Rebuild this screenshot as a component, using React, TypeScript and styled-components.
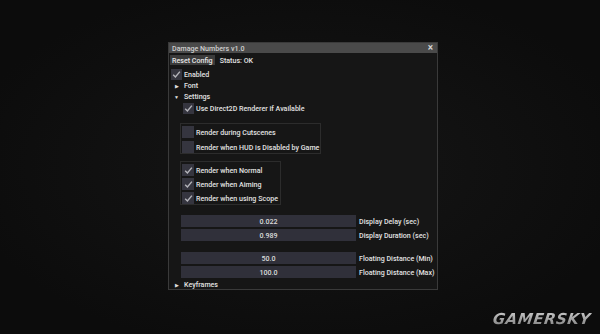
import React from "react";
import styled, { createGlobalStyle } from "styled-components";

const Global = createGlobalStyle`
  html, body { margin: 0; padding: 0; background: #0e0e0e; }
  body { width: 600px; height: 334px; overflow: hidden; font-family: Roboto, "Noto Sans", "Liberation Sans", sans-serif; }
`;

const Page = styled.div`
  position: relative;
  width: 600px;
  height: 334px;
  padding: 42px 0 0 168px;
  box-sizing: border-box;
  background: radial-gradient(ellipse at 50% 50%, #161616 0%, #0c0c0c 80%);
`;

const Window = styled.div`
  width: 270px;
  height: 248px;
  box-sizing: border-box;
  background: #161616;
  border: 1px solid #3a3a3a;
  display: flex;
  flex-direction: column;
  color: #e2e2e2;
  font-size: 7.1px;
  font-weight: 500;
  white-space: nowrap;
`;

const TitleBar = styled.div`
  height: 11px;
  background: #4a4a4a;
  display: flex;
  align-items: center;
  justify-content: space-between;
  padding: 0 4px 0 3px;
  color: #d0d0d0;
`;

const Close = styled.span`
  font-size: 10px;
  line-height: 1;
  color: #d8d8d8;
`;

const Body = styled.div`
  display: flex;
  flex-direction: column;
  padding: 1px 0 0 1px;
`;

const MenuRow = styled.div`
  height: 10px;
  display: flex;
  align-items: center;
  gap: 5px;
  margin-top: 1px;
`;

const Btn = styled.div`
  height: 10px;
  padding: 0 2px;
  background: #3b3b3b;
  display: flex;
  align-items: center;
  color: #e6e6e6;
`;

const Row = styled.div<{ $indent?: number; $top?: number; $h?: number }>`
  display: flex;
  align-items: center;
  height: ${(p) => p.$h ?? 11}px;
  padding-left: ${(p) => p.$indent ?? 0}px;
  margin-top: ${(p) => p.$top ?? 0}px;
  gap: 2px;
`;

const Box = styled.div<{ $size?: number }>`
  width: ${(p) => p.$size ?? 11}px;
  height: ${(p) => p.$size ?? 11}px;
  background: #35353f;
  display: flex;
  align-items: center;
  justify-content: center;
  flex-shrink: 0;
`;

const Arrow = styled.span`
  width: 11px;
  display: flex;
  justify-content: center;
  font-size: 5px;
  color: #e0e0e0;
`;

const Group = styled.div<{ $w: number; $top: number; $gap: number }>`
  width: ${(p) => p.$w}px;
  margin-left: 10px;
  margin-top: ${(p) => p.$top}px;
  border: 1px solid #2c2c2c;
  box-sizing: border-box;
  padding: 2px 0 0 1px;
  display: flex;
  flex-direction: column;
  gap: ${(p) => p.$gap}px;
`;

const InputRow = styled.div<{ $top: number }>`
  display: flex;
  align-items: center;
  margin-left: 11px;
  margin-top: ${(p) => p.$top}px;
  height: 12px;
  gap: 3px;
`;

const Field = styled.div`
  width: 175px;
  flex-shrink: 0;
  height: 12px;
  background: #30303a;
  display: flex;
  align-items: center;
  justify-content: center;
  color: #dcdcdc;
`;

const Watermark = styled.div`
  position: absolute;
  right: 9px;
  bottom: 6px;
  font-family: "DejaVu Sans", "Liberation Sans", sans-serif;
  font-weight: 900;
  font-style: italic;
  font-size: 15px;
  letter-spacing: 0.5px;
  transform: skewX(-8deg);
  background: linear-gradient(#d0d0d0, #7a7a7a);
  -webkit-background-clip: text;
  background-clip: text;
  -webkit-text-fill-color: transparent;
`;

const Check = () => (
  <svg width="9" height="9" viewBox="0 0 9 9">
    <path d="M1.2 4.8 L3.4 7 L7.9 1.6" stroke="#b4b4ba" strokeWidth="1.4" fill="none" />
  </svg>
);

const CheckRow: React.FC<{ checked?: boolean; label: string }> = ({ checked, label }) => (
  <Row $h={12}>
    <Box $size={12}>{checked && <Check />}</Box>
    <span>{label}</span>
  </Row>
);

export default function App() {
  return (
    <>
      <Global />
      <Page>
        <Window>
          <TitleBar>
            <span>Damage Numbers v1.0</span>
            <Close>×</Close>
          </TitleBar>
          <Body>
            <MenuRow>
              <Btn>Reset Config</Btn>
              <span>Status: OK</span>
            </MenuRow>
            <Row $indent={1} $top={3} $h={12}>
              <Box><Check /></Box>
              <span>Enabled</span>
            </Row>
            <Row $indent={1}>
              <Arrow>▶</Arrow>
              <span>Font</span>
            </Row>
            <Row $indent={1}>
              <Arrow>▼</Arrow>
              <span>Settings</span>
            </Row>
            <Row $indent={13} $top={1}>
              <Box><Check /></Box>
              <span>Use Direct2D Renderer if Available</span>
            </Row>
            <Group $w={141} $top={9} $gap={3}>
              <CheckRow label="Render during Cutscenes" />
              <CheckRow label="Render when HUD is Disabled by Game" />
            </Group>
            <Group $w={101} $top={7} $gap={2}>
              <CheckRow checked label="Render when Normal" />
              <CheckRow checked label="Render when Aiming" />
              <CheckRow checked label="Render when using Scope" />
            </Group>
            <InputRow $top={10}>
              <Field>0.022</Field>
              <span>Display Delay (sec)</span>
            </InputRow>
            <InputRow $top={2}>
              <Field>0.989</Field>
              <span>Display Duration (sec)</span>
            </InputRow>
            <InputRow $top={11}>
              <Field>50.0</Field>
              <span>Floating Distance (Min)</span>
            </InputRow>
            <InputRow $top={2}>
              <Field>100.0</Field>
              <span>Floating Distance (Max)</span>
            </InputRow>
            <Row $indent={1} $top={1}>
              <Arrow>▶</Arrow>
              <span>Keyframes</span>
            </Row>
          </Body>
        </Window>
        <Watermark>GAMERSKY</Watermark>
      </Page>
    </>
  );
}
